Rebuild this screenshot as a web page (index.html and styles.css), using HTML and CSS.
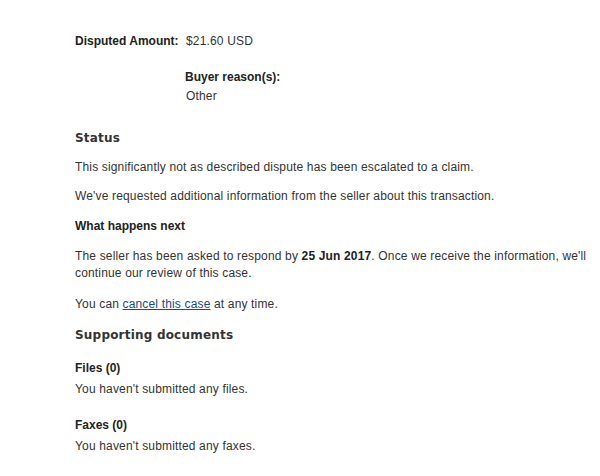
FILE: index.html
```html
<!DOCTYPE html>
<html>
<head>
<meta charset="utf-8">
<link rel="stylesheet" href="styles.css">
</head>
<body>
<div class="page">
  <div class="details">
    <div class="label">Disputed Amount:</div>
    <div class="value">$21.60 USD</div>
    <div class="spacer"></div>
    <div class="reason">
      <div class="reason-title">Buyer reason(s):</div>
      <div class="reason-value">Other</div>
    </div>
  </div>

  <h2 class="section-title status-title">Status</h2>
  <p class="first">This significantly not as described dispute has been escalated to a claim.</p>
  <p>We've requested additional information from the seller about this transaction.</p>
  <h3 class="sub-title">What happens next</h3>
  <p class="first-sub">The seller has been asked to respond by <strong>25 Jun 2017</strong>. Once we receive the information, we'll continue our review of this case.</p>
  <p>You can <a href="#" class="link">cancel this case</a> at any time.</p>

  <h2 class="section-title docs-title">Supporting documents</h2>
  <h3 class="doc-title">Files (0)</h3>
  <p class="doc-text">You haven't submitted any files.</p>
  <h3 class="doc-title faxes">Faxes (0)</h3>
  <p class="doc-text">You haven't submitted any faxes.</p>
</div>
</body>
</html>
```

FILE: styles.css
```css
html, body {
  margin: 0;
  padding: 0;
  background: #fff;
}
body {
  font-family: "Liberation Sans", Arial, sans-serif;
  font-size: 12px;
  line-height: 17px;
  color: #333;
  letter-spacing: 0.16px;
}
.page {
  padding: 33px 0 0 75px;
  width: 525px;
}
.details {
  display: grid;
  grid-template-columns: 111px auto;
  row-gap: 19px;
}
.label {
  font-weight: bold;
  color: #222;
  letter-spacing: 0;
}
.reason-title {
  font-weight: bold;
  color: #222;
  margin-left: -1px;
  letter-spacing: 0;
}
.reason-value {
  margin-top: 2px;
}
h2, h3, p {
  margin: 0;
}
.section-title {
  font-family: "DejaVu Sans", Verdana, sans-serif;
  font-size: 12px;
  line-height: 17px;
  font-weight: bold;
  color: #333;
  letter-spacing: 0.2px;
}
.status-title {
  margin-top: 25px;
}
p {
  margin-bottom: 13px;
}
p.first {
  margin-top: 12px;
  margin-bottom: 12px;
}
.sub-title {
  font-size: 12px;
  font-weight: bold;
  color: #222;
  letter-spacing: 0;
}
p.first-sub {
  margin-top: 13px;
  margin-bottom: 14px;
}
p strong {
  color: #222;
}
.link {
  color: #1a4a7f;
  text-decoration: underline;
}
.docs-title {
  margin-top: 14px;
}
.doc-title {
  font-size: 12px;
  font-weight: bold;
  color: #222;
  margin-top: 16px;
  letter-spacing: 0;
}
.doc-title.faxes {
  margin-top: 19px;
}
.doc-text {
  margin-top: 4px;
}
```
